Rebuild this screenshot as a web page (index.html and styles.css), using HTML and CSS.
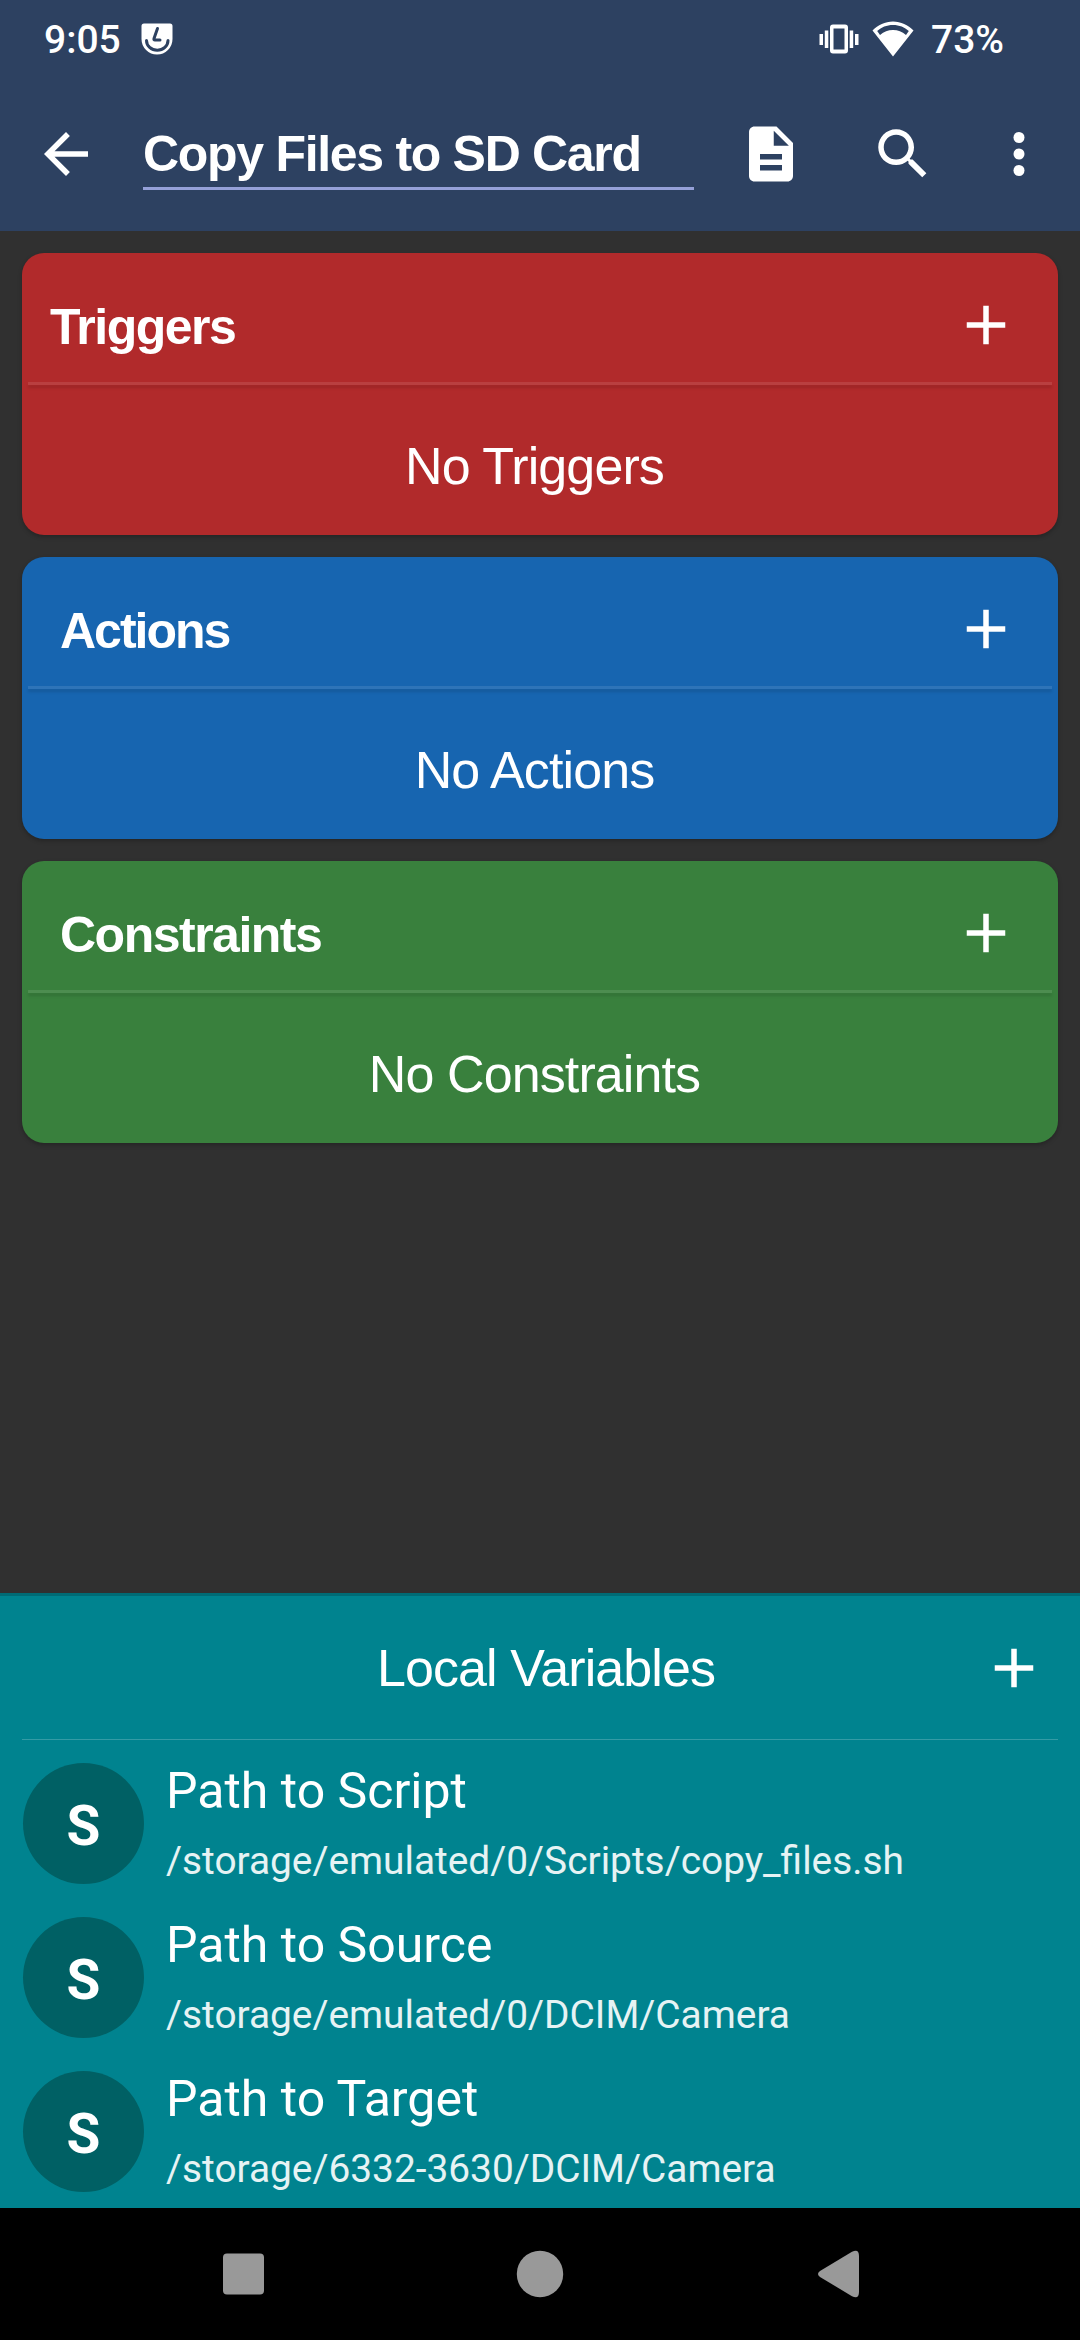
FILE: index.html
```html
<!DOCTYPE html>
<html lang="en">
<head>
<meta charset="utf-8">
<title>Copy Files to SD Card</title>
<link rel="stylesheet" href="styles.css">
</head>
<body>
<div class="screen">
  <header class="header">
    <div class="status">
      <span class="clock">9:05</span>
      <svg class="face" viewBox="0 0 32 32"><path fill="#fff" d="M3 0.500H29Q31.500 0.500 31.500 3V16A15.500 15.500 0 0 1 0.500 16V3Q0.500 0.500 3 0.500Z"/><path fill="none" stroke="#2d4161" stroke-width="3" stroke-linecap="round" stroke-linejoin="round" d="M16.500 5.500L13 15.500Q12.500 17 14 17H19M5.500 17.500A10.500 9.500 0 0 0 27 17.500"/></svg>
      <span class="spacer"></span>
      <svg class="vibrate" viewBox="0 0 40 30"><g fill="#fff"><path fill-rule="evenodd" d="M14 0.500H26Q29 0.500 29 3.500V26.500Q29 29.500 26 29.500H14Q11 29.500 11 26.500V3.500Q11 0.500 14 0.500ZM14.500 4.500V25.500H25.500V4.500Z"/><path d="M0.500 10H4V21H0.500ZM5.800 6.500H9.300V24H5.800ZM30.700 6.500H34.200V24H30.700ZM36 10H39.500V21H36Z"/></g></svg>
      <svg class="wifi" viewBox="0 0 42 36"><path fill="#fff" fill-rule="evenodd" d="M21 0.500C13 0.500 6 4 0.500 9.500L21 35.500L41.500 9.500C36 4 29 0.500 21 0.500ZM21 4C27.500 4 32.500 6.300 36.800 10L34 14C30 10.500 26 9 21 9C16 9 12 10.500 8 14L5.200 10C9.500 6.300 14.500 4 21 4Z"/></svg>
      <span class="battery">73%</span>
    </div>
    <div class="toolbar">
      <svg class="icon" viewBox="0 0 24 24"><path d="M20 11H7.830l5.590-5.590L12 4l-8 8 8 8 1.410-1.410L7.830 13H20v-2z"/></svg>
      <div class="title">Copy Files to SD Card</div>
      <svg class="icon doc" viewBox="0 0 24 24"><path d="M14 2H6c-1.100 0-1.990.9-1.990 2L4 20c0 1.100.89 2 1.990 2H18c1.100 0 2-.9 2-2V8l-6-6zm2 16H8v-2h8v2zm0-4H8v-2h8v2zm-3-5V3.500L18.500 9H13z"/></svg>
      <svg class="icon search" viewBox="0 0 24 24"><path d="M15.500 14h-.79l-.28-.27C15.410 12.590 16 11.110 16 9.500 16 5.910 13.090 3 9.500 3S3 5.910 3 9.500 5.910 16 9.500 16c1.610 0 3.090-.59 4.230-1.570l.27.28v.79l5 4.990L20.490 19l-4.990-5zm-6 0C7.010 14 5 11.990 5 9.500S7.010 5 9.500 5 14 7.010 14 9.500 11.990 14 9.500 14z"/></svg>
      <svg class="icon more" viewBox="0 0 24 24"><circle cx="12" cy="6" r="2"/><circle cx="12" cy="12" r="2"/><circle cx="12" cy="18" r="2"/></svg>
    </div>
  </header>

  <main class="cards">
    <section class="card triggers">
      <div class="card-head"><h2>Triggers</h2><svg class="icon" viewBox="0 0 24 24"><path d="M19 13h-6v6h-2v-6H5v-2h6V5h2v6h6v2z"/></svg></div>
      <div class="rule"></div>
      <p class="empty">No Triggers</p>
    </section>
    <section class="card actions">
      <div class="card-head"><h2>Actions</h2><svg class="icon" viewBox="0 0 24 24"><path d="M19 13h-6v6h-2v-6H5v-2h6V5h2v6h6v2z"/></svg></div>
      <div class="rule"></div>
      <p class="empty">No Actions</p>
    </section>
    <section class="card constraints">
      <div class="card-head"><h2>Constraints</h2><svg class="icon" viewBox="0 0 24 24"><path d="M19 13h-6v6h-2v-6H5v-2h6V5h2v6h6v2z"/></svg></div>
      <div class="rule"></div>
      <p class="empty">No Constraints</p>
    </section>
  </main>

  <section class="locals">
    <div class="locals-head"><h3>Local Variables</h3><svg class="icon" viewBox="0 0 24 24"><path d="M19 13h-6v6h-2v-6H5v-2h6V5h2v6h6v2z"/></svg></div>
    <ul class="vars">
      <li><span class="badge">S</span><div><div class="name">Path to Script</div><div class="value">/storage/emulated/0/Scripts/copy_files.sh</div></div></li>
      <li><span class="badge">S</span><div><div class="name">Path to Source</div><div class="value">/storage/emulated/0/DCIM/Camera</div></div></li>
      <li><span class="badge">S</span><div><div class="name">Path to Target</div><div class="value">/storage/6332-3630/DCIM/Camera</div></div></li>
    </ul>
  </section>

  <nav class="nav">
    <svg viewBox="0 0 48 48"><rect x="4" y="3.500" width="41" height="41" rx="4"/></svg>
    <svg viewBox="0 0 48 48"><circle cx="24" cy="24" r="23.200"/></svg>
    <svg viewBox="-3 0 48 48"><path d="M36 1.800Q43 -1.500 43 6V42Q43 49.500 36 46.200L4 27Q0 24 4 21Z"/></svg>
  </nav>
</div>
</body>
</html>
```
FILE: styles.css
```css
* { box-sizing: border-box; margin: 0; padding: 0; }
body { background: #303030; color: #fff; font-family: Roboto, sans-serif; }
.screen { width: 1080px; height: 2340px; display: flex; flex-direction: column; overflow: hidden; }

.header { height: 231px; background: #2d4161; flex: none; }
.status { height: 77px; display: flex; align-items: center; padding: 0 78px 0 44px; font-size: 39px; font-weight: 500; line-height: 77px; }
.status span { padding-top: 4px; }
.clock { width: 97px; }
.face { width: 32px; height: 32px; }
.spacer { flex: 1; }
.vibrate { width: 40px; height: 30px; margin-right: 13px; }
.wifi { width: 42px; height: 36px; margin-right: 17px; }
.battery { width: 71px; white-space: nowrap; }
.toolbar { height: 154px; display: flex; align-items: center; padding: 0 28px 0 33px; }
.icon { width: 66px; height: 66px; fill: #fff; flex: none; }
.title { width: 551px; height: 72px; margin-left: 44px; border-bottom: 3px solid #95a0d8; font: bold 50px/72px "Liberation Sans", sans-serif; letter-spacing: -1.300px; white-space: nowrap; }
.doc { margin-left: 44px; }
.search { margin-left: 66px; }
.more { margin-left: 50px; }

.cards { flex: 1; display: flex; flex-direction: column; gap: 22px; padding: 22px; }
.card { height: 282px; border-radius: 22px; box-shadow: 0 2px 4px rgba(0, 0, 0, .25); font-family: "Liberation Sans", sans-serif; }
.triggers { background: #b12a2b; }
.actions { background: #1765b0; }
.constraints { background: #39803d; }
.card-head { height: 129px; display: flex; align-items: center; justify-content: space-between; padding: 15px 39px 0 38px; }
.triggers .card-head { padding-left: 28px; }
.card h2 { font-size: 50px; letter-spacing: -1.500px; padding-top: 4px; }
.actions h2 { letter-spacing: -2px; }
.rule { height: 3px; margin: 0 6px; background: rgba(255, 255, 255, .1); box-shadow: 0 3px 3px rgba(0, 0, 0, .12); }
.empty { height: 150px; padding-right: 11px; font-size: 52px; line-height: 163px; letter-spacing: -.9px; text-align: center; }

.locals { height: 615px; flex: none; background: #00838f; border-top: 3px solid #006b75; padding: 0 22px; }
.locals-head { height: 144px; display: grid; grid-template-columns: 89px 1fr 66px; align-items: center; padding-right: 11px; border-bottom: 1px solid #339ba5; }
.locals h3 { grid-column: 2; font: 52px "Liberation Sans", sans-serif; letter-spacing: -.9px; text-align: center; }
.vars { list-style: none; padding-top: 6px; }
.vars li { height: 154px; display: flex; align-items: center; gap: 22px; padding-left: 1px; }
.badge { width: 121px; height: 121px; border-radius: 50%; background: #006064; font-size: 55px; font-weight: 700; line-height: 127px; text-align: center; }
.name { font-size: 50px; line-height: 66px; padding-top: 2px; white-space: nowrap; }
.value { font-size: 38.850px; line-height: 60px; margin-top: 7px; color: #e6f3f4; white-space: nowrap; }

.nav { height: 132px; flex: none; background: #000; display: flex; justify-content: center; align-items: center; gap: 249px; }
.nav svg { width: 48px; height: 48px; fill: #999; }
```
